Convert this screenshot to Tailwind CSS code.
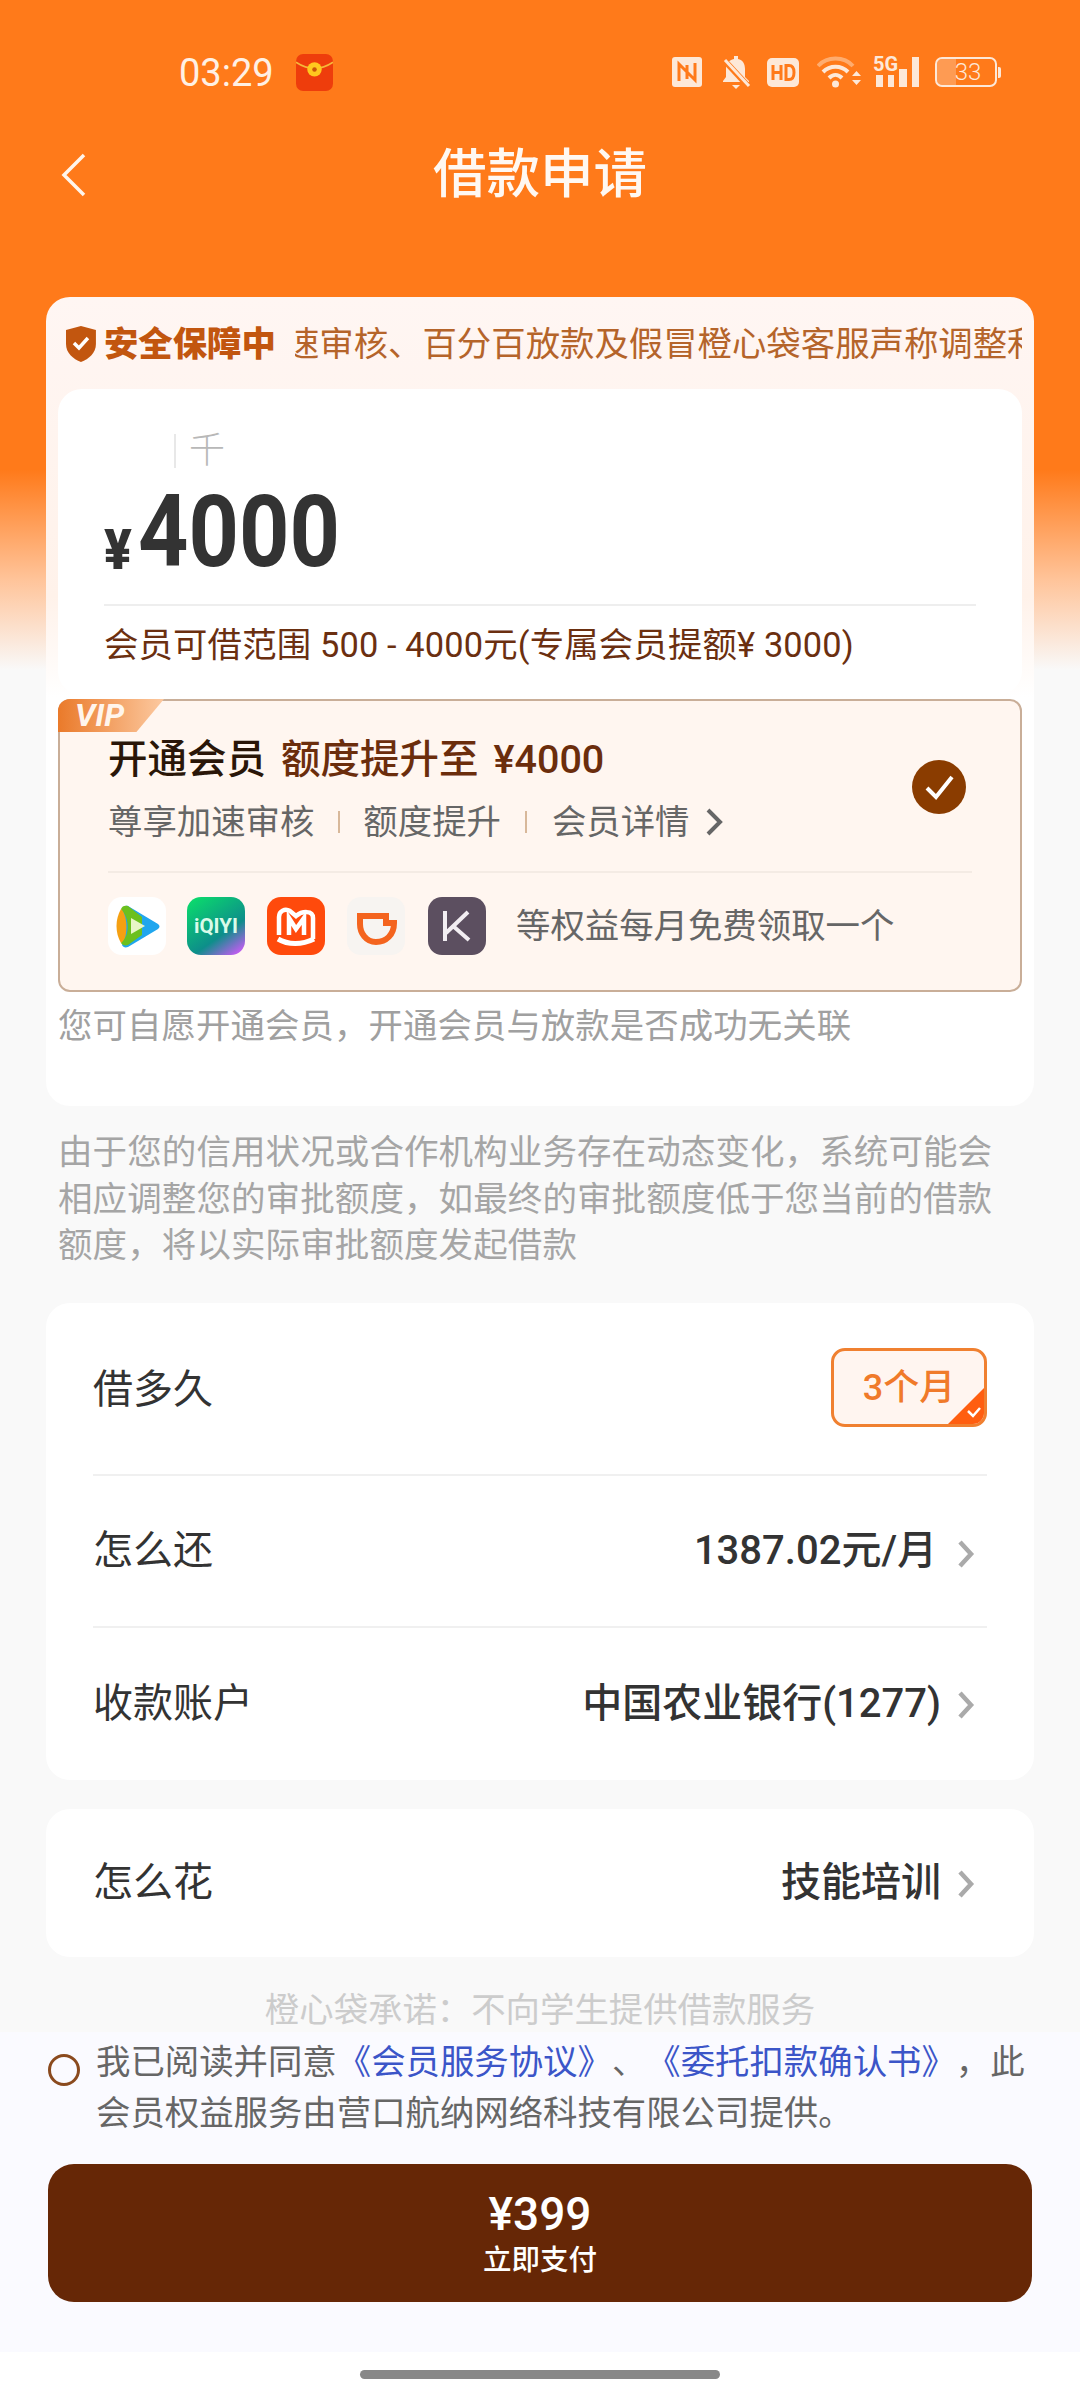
<!DOCTYPE html>
<html lang="zh-CN">
<head>
    <meta charset="utf-8" />
    <meta name="viewport" content="width=device-width, initial-scale=1.0" />
    <title>借款申请</title>
    <script src="https://cdn.jsdelivr.net/npm/@tailwindcss/browser@4"></script>
</head>
<body>
<div class="w-[1080px] h-[2400px] overflow-hidden flex flex-col bg-[linear-gradient(180deg,#ff7a1a_0px,#ff7a1a_470px,#ffc49a_580px,#f9f9f9_670px,#f9f9f9_100%)] font-['Roboto','Noto_Sans_CJK_SC',sans-serif] [text-spacing-trim:space-all]">

    <!-- Status bar -->
    <div class="h-[144px] shrink-0 flex items-center pl-[179px] pr-[79px] text-[#fff0e4]">
        <span class="text-[38px] leading-none w-[96px] mt-[2px] whitespace-nowrap">03:29</span>
        <svg class="ml-[21px]" width="37" height="37" viewBox="0 0 36 36">
            <rect width="36" height="36" rx="7" fill="#ee3d0c"/>
            <path d="M0 8 Q18 20 36 8" stroke="#f5b83a" stroke-width="1.5" fill="none"/>
            <circle cx="18" cy="15" r="7" fill="#ffc81e"/>
            <circle cx="18" cy="15" r="2.2" fill="#c9560a"/>
        </svg>
        <div class="ml-auto flex items-center">
            <!-- nfc -->
            <svg width="30" height="30" viewBox="0 0 30 30">
                <rect width="30" height="30" rx="3" fill="#fde8d8"/>
                <path d="M7 24V7l8 8M23 6v17l-8-8M15 8v14" stroke="#ff7a1a" stroke-width="3" fill="none"/>
            </svg>
            <!-- muted bell -->
            <svg class="ml-[18px]" width="32" height="34" viewBox="0 0 32 34">
                <path d="M14 1h4v3c5 1 7 5 7 10v8l4 4v1H3v-1l3-4v-8c0-5 3-9 8-10z" fill="#fde8d8"/>
                <path d="M12 30h8l-4 4z" fill="#fde8d8"/>
                <path d="M3 4l25 27" stroke="#ff7a1a" stroke-width="6"/>
                <path d="M5 5l24 26" stroke="#fde8d8" stroke-width="3"/>
            </svg>
            <!-- hd -->
            <svg class="ml-[15px]" width="32" height="29" viewBox="0 0 32 29">
                <rect width="32" height="29" rx="5" fill="#fde8d8"/>
                <path d="M6 7v15M14 7v15M6 14.5h8" stroke="#ff7a1a" stroke-width="3" fill="none"/>
                <path d="M19 7.5v14h3c4 0 5-3 5-7s-1-7-5-7z" stroke="#ff7a1a" stroke-width="3" fill="none"/>
            </svg>
            <!-- wifi -->
            <svg class="ml-[18px]" width="44" height="32" viewBox="0 0 44 32">
                <path d="M1 10C10 0 27 0 36 10" stroke="#fde8d8" stroke-opacity=".45" stroke-width="4" fill="none"/>
                <path d="M6 16C13 9 24 9 31 16" stroke="#fde8d8" stroke-width="4" fill="none"/>
                <path d="M12 22C16 18 21 18 25 22" stroke="#fde8d8" stroke-width="4" fill="none"/>
                <circle cx="18.500" cy="28" r="3.500" fill="#fde8d8"/>
                <path d="M35 20l4.500 -5l4.500 5zM35 24l4.500 5l4.500 -5z" fill="#fde8d8"/>
            </svg>
            <!-- 5g signal -->
            <div class="ml-[15px] relative w-[43px] h-[30px] flex items-end gap-[5px]">
                <span class="absolute left-[-3px] top-0 text-[20px] leading-[15px] font-bold text-[#fde8d8]">5G</span>
                <span class="w-[7px] h-[12px] bg-[#fde8d8]"></span>
                <span class="w-[6px] h-[12px] bg-[#fde8d8]"></span>
                <span class="w-[8px] h-[18px] bg-[#fde8d8]"></span>
                <span class="w-[7px] h-[30px] bg-[#fde8d8]"></span>
            </div>
            <!-- battery -->
            <div class="ml-[16px] flex items-center">
                <div class="relative w-[62px] h-[30px] rounded-[7px] border-2 border-[#fde8d8] overflow-hidden flex items-center justify-center">
                    <span class="absolute left-0 top-0 bottom-0 w-[19px] bg-[#fde8d8]/30"></span>
                    <span class="text-[24px] leading-none font-light text-[#fde8d8] pl-[4px]">33</span>
                </div>
                <span class="ml-[1px] w-[3px] h-[11px] rounded-r-[2px] bg-[#fde8d8]"></span>
            </div>
        </div>
    </div>

    <!-- Nav -->
    <div class="h-[62px] shrink-0 relative flex items-center justify-center">
        <svg class="absolute left-[61px] top-[9px]" width="25" height="44" viewBox="0 0 25 44">
            <path d="M23 2L3 22l20 20" stroke="#fff5ec" stroke-width="3.500" fill="none"/>
        </svg>
        <h1 class="text-[53.500px] leading-none font-medium text-[#fff8f2]">借款申请</h1>
    </div>

    <!-- Amount card -->
    <div class="mt-[91px] mx-[46px] h-[809px] shrink-0 rounded-[24px] bg-[linear-gradient(180deg,#fff6f3_0px,#fff2ea_300px,#ffffff_400px)] px-[12px] flex flex-col">
        <div class="h-[92px] shrink-0 flex items-center pt-[2px]">
            <svg class="ml-[8px]" width="30" height="36" viewBox="0 0 30 36">
                <path d="M15 0l15 4v14c0 9-7 15-15 18C7 33 0 27 0 18V4z" fill="#c2560f"/>
                <path d="M8 17l5 5 9-10" stroke="#fff" stroke-width="3.500" fill="none"/>
            </svg>
            <span class="ml-[8px] text-[34.400px] leading-none font-black text-[#c2560f] whitespace-nowrap">安全保障中</span>
            <div class="ml-[19px] w-[729px] overflow-hidden">
                <div class="-ml-[10px] text-[34.400px] leading-none text-[#b5642a] whitespace-nowrap">速审核、百分百放款及假冒橙心袋客服声称调整利率</div>
            </div>
        </div>

        <div class="h-[306px] shrink-0 rounded-[24px] bg-white px-[46px] flex flex-col">
            <div class="mt-[44px] h-[36px] pl-[70px] flex items-center">
                <span class="w-[2px] h-[34px] bg-[#e8e8e8]"></span>
                <span class="ml-[13px] text-[36px] leading-none font-light text-[#b8b8b8]">千</span>
            </div>
            <div class="mt-[27px] h-[72px] flex items-end">
                <span class="text-[56px] leading-none font-black text-[#333333] mb-[-10px] origin-left scale-x-[0.92] w-[28px]">¥</span>
                <span class="ml-[6px] text-[100px] leading-[72px] font-bold text-[#333333] origin-left scale-x-[0.88]">4000</span>
            </div>
            <div class="mt-[36px] h-[2px] bg-[#eeeeee]"></div>
            <div class="mt-[19px] text-[34.400px] leading-[40px] tracking-[0.15px] text-[#6b2f10] whitespace-nowrap">会员可借范围 500 - 4000元(专属会员提额¥ 3000)</div>
        </div>

        <!-- VIP box -->
        <div class="relative mt-[4px] h-[293px] shrink-0 rounded-[12px] border-2 border-[#c9ae98] bg-[#fff6f0] px-[48px] flex flex-col">
            <div class="absolute left-[-2px] top-[-2px] w-[106px] h-[33px] rounded-tl-[12px] bg-[linear-gradient(90deg,#ea7a2a,#fcc9a0)] [clip-path:polygon(0_0,100%_0,74%_100%,0_100%)] pl-[17px] text-[32px] leading-[32px] font-bold italic text-[#fff5ec]">VIP</div>
            <div class="mt-[37px] flex items-center justify-between">
                <div class="flex flex-col">
                    <div class="text-[39.500px] leading-[44px] font-medium text-[#6b2d0c] whitespace-nowrap"><span class="text-[#2a1608]">开通会员</span><span class="ml-[15px]">额度提升至</span><span class="ml-[15px]">¥4000</span></div>
                    <div class="mt-[22px] h-[36px] flex items-center text-[34.400px] leading-none text-[#666666] whitespace-nowrap">
                        <span>尊享加速审核</span>
                        <span class="ml-[24px] w-[2px] h-[22px] bg-[#d8b89a]"></span>
                        <span class="ml-[23px]">额度提升</span>
                        <span class="ml-[24px] w-[2px] h-[22px] bg-[#d8b89a]"></span>
                        <span class="ml-[25px]">会员详情</span>
                        <svg class="ml-[15px]" width="19" height="28" viewBox="0 0 19 28">
                            <path d="M3 2l12 12L3 26" stroke="#666666" stroke-width="4" fill="none"/>
                        </svg>
                    </div>
                </div>
                <svg class="mr-[6px] mb-[4px]" width="54" height="54" viewBox="0 0 54 54">
                    <circle cx="27" cy="27" r="27" fill="#8a3c00"/>
                    <path d="M15 28l9 9 16-20" stroke="#fff" stroke-width="4" fill="none"/>
                </svg>
            </div>
            <div class="mt-[31px] h-[2px] bg-[#f4ebe4]"></div>
            <div class="mt-[24px] flex items-center">
                <svg width="58" height="58" viewBox="0 0 58 58">
                    <rect width="58" height="58" rx="14" fill="#ffffff"/>
                    <path d="M13 12c-6 10-6 24 0 34l8-2V14z" fill="#f5a012"/>
                    <path d="M20 9l30 18c2 2 2 3 0 5L20 50c-3 1-5 0-6-2 6-10 6-26 0-36 1-2 3-4 6-3z" fill="#20a6ee"/>
                    <path d="M13 12c8 8 10 26 0 34 1 2 4 3 7 2l14-10V20L20 9c-3-1-6 0-7 3z" fill="#6cc01e"/>
                    <path d="M23 21l14 8-14 8z" fill="#e8f5c8"/>
                </svg>
                <svg class="ml-[21px]" width="58" height="58" viewBox="0 0 58 58">
                    <defs>
                        <linearGradient id="iqiyi" x1="0.150" y1="0" x2="0.850" y2="1">
                            <stop offset="0" stop-color="#0bd96d"/>
                            <stop offset="0.650" stop-color="#0d8e8a"/>
                            <stop offset="1" stop-color="#c35cf2"/>
                        </linearGradient>
                    </defs>
                    <rect width="58" height="58" rx="14" fill="url(#iqiyi)"/>
                    <text x="29" y="36" text-anchor="middle" font-size="20.500" font-weight="700" font-family="Roboto" fill="#d9fbe9">iQIYI</text>
                </svg>
                <svg class="ml-[22px]" width="58" height="58" viewBox="0 0 58 58">
                    <rect width="58" height="58" rx="14" fill="#ff4a0c"/>
                    <path d="M12 38V20c0-6 6-9 11-6l6 5c6-5 17-6 17 2v21" stroke="#fff" stroke-width="4.500" fill="none"/>
                    <path d="M11 42c10 6 24 6 36 0" stroke="#fff" stroke-width="5" fill="none"/>
                    <path d="M22 38V21l7 11 8-11v17" stroke="#fff" stroke-width="4.500" fill="none"/>
                </svg>
                <svg class="ml-[22px]" width="58" height="58" viewBox="0 0 58 58">
                    <rect width="58" height="58" rx="14" fill="#f7f4f1"/>
                    <path d="M13 19h26v7h8c0 12-8 19-18 19s-16-9-16-18z" stroke="#f4641e" stroke-width="6" fill="none"/>
                </svg>
                <svg class="ml-[23px]" width="58" height="58" viewBox="0 0 58 58">
                    <rect width="58" height="58" rx="14" fill="#5c4f60"/>
                    <path d="M17 14v30M40 15L18 36M25 29l16 14" stroke="#f2eef2" stroke-width="4" fill="none"/>
                </svg>
                <span class="ml-[30px] text-[34.400px] leading-none text-[#666666] whitespace-nowrap">等权益每月免费领取一个</span>
            </div>
        </div>

        <div class="mt-[14px] text-[34.400px] leading-[40px] tracking-[0.1px] text-[#a0a0a0] whitespace-nowrap">您可自愿开通会员，开通会员与放款是否成功无关联</div>
    </div>

    <!-- Notice -->
    <p class="mt-[23px] ml-[58px] h-[140px] shrink-0 text-[34.500px] leading-[46.500px] tracking-[0.1px] text-[#a5a5a5] whitespace-nowrap">由于您的信用状况或合作机构业务存在动态变化，系统可能会<br/>相应调整您的审批额度，如最终的审批额度低于您当前的借款<br/>额度，将以实际审批额度发起借款</p>

    <!-- Loan details -->
    <div class="mt-[34px] mx-[46px] h-[477px] shrink-0 rounded-[24px] bg-white px-[47px] flex flex-col text-[#333333]">
        <div class="h-[173px] shrink-0 flex items-center justify-between border-b-2 border-[#f0f0f0]">
            <span class="text-[40px] leading-none mt-[3px]">借多久</span>
            <div class="relative w-[156px] h-[79px] mt-[-2px] rounded-[14px] border-[3px] border-[#f08030] bg-[#fff5f0] overflow-hidden flex items-center justify-center">
                <span class="text-[36px] leading-none font-medium text-[#f07a2a]">3个月</span>
                <span class="absolute right-0 bottom-0 w-[36px] h-[36px] bg-[#ff5e10] [clip-path:polygon(100%_0,100%_100%,0_100%)]"></span>
                <svg class="absolute right-[2px] bottom-[6px]" width="16" height="12" viewBox="0 0 16 12">
                    <path d="M2 5l5 5 7-8" stroke="#fff" stroke-width="2.500" fill="none"/>
                </svg>
            </div>
        </div>
        <div class="h-[152px] shrink-0 flex items-center justify-between border-b-2 border-[#f0f0f0]">
            <span class="text-[40px] leading-none">怎么还</span>
            <div class="flex items-center">
                <span class="text-[40px] leading-none font-medium">1387.02元/月</span>
                <svg class="ml-[20px] mr-[12px] mt-[6px]" width="18" height="28" viewBox="0 0 18 28">
                    <path d="M3 2l11 12L3 26" stroke="#aaaaaa" stroke-width="4.500" fill="none"/>
                </svg>
            </div>
        </div>
        <div class="flex-1 flex items-center justify-between">
            <span class="text-[40px] leading-none">收款账户</span>
            <div class="flex items-center">
                <span class="text-[40px] leading-none font-medium">中国农业银行(1277)</span>
                <svg class="ml-[16px] mr-[12px] mt-[2px]" width="18" height="28" viewBox="0 0 18 28">
                    <path d="M3 2l11 12L3 26" stroke="#aaaaaa" stroke-width="4.500" fill="none"/>
                </svg>
            </div>
        </div>
    </div>

    <div class="mt-[29px] mx-[46px] h-[148px] shrink-0 rounded-[24px] bg-white px-[47px] flex items-center justify-between text-[#333333]">
        <span class="text-[40px] leading-none">怎么花</span>
        <div class="flex items-center">
            <span class="text-[40px] leading-none font-medium">技能培训</span>
            <svg class="ml-[16px] mr-[12px] mt-[2px]" width="18" height="28" viewBox="0 0 18 28">
                <path d="M3 2l11 12L3 26" stroke="#aaaaaa" stroke-width="4.500" fill="none"/>
            </svg>
        </div>
    </div>

    <div class="mt-[33px] h-[40px] shrink-0 text-center text-[34.400px] leading-[40px] text-[#cccccc]">橙心袋承诺：不向学生提供借款服务</div>

    <!-- Bottom pay bar -->
    <div class="mt-[2px] h-[320px] shrink-0 bg-[#fafaff] px-[48px]">
        <div class="relative mt-[5px] pl-[48px] text-[34.400px] leading-[51px] text-[#666666] whitespace-nowrap">
            <span class="absolute left-0 top-[17px] w-[32px] h-[32px] rounded-full border-[3px] border-[#8a4a1e]"></span>
            我已阅读并同意<span class="text-[#3b55c8]">《会员服务协议》</span>、<span class="text-[#3b55c8]">《委托扣款确认书》</span>，此<br/>会员权益服务由营口航纳网络科技有限公司提供。
        </div>
        <div class="mt-[25px] h-[138px] rounded-[26px] bg-[#662706] flex flex-col items-center justify-center text-white">
            <span class="text-[46px] leading-[50px] font-medium">¥399</span>
            <span class="text-[28.500px] leading-[32px] mt-[6px] font-medium">立即支付</span>
        </div>
    </div>

    <div class="flex-1 bg-white pt-[18px]">
        <div class="mx-auto w-[360px] h-[9px] rounded-full bg-[#888888]"></div>
    </div>
</div>
</body>
</html>
